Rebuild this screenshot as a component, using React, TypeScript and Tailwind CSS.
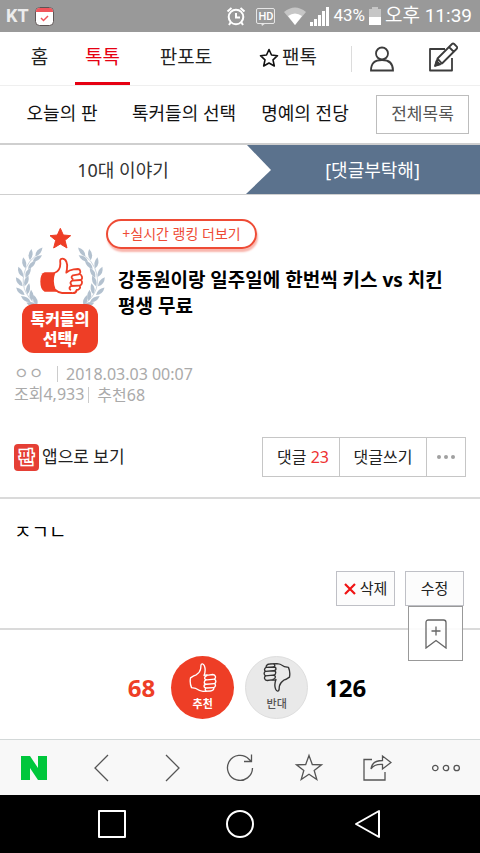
import React from 'react';

interface IconProps {
  className?: string;
}

const SUB_MENU = ['오늘의 판', '톡커들의 선택', '명예의 전당'];

// [x, y, angle] of each leaf on the left branch; the right one is mirrored
const LEAVES = [
  [106, 138, 36],
  [90, 150, 4],
  [98, 154, 52],
  [76, 174, -14],
  [84, 176, 40],
  [69, 200, -28],
  [76, 202, 26],
  [68, 228, -40],
  [74, 228, 16],
  [74, 254, -52],
  [82, 252, 6],
  [92, 275, -62],
  [96, 272, -8],
  [112, 286, -78],
  [112, 285, -24],
];

const Branch: React.FC = () => (
  <g fill="#b3c1cf">
    <path d="M114 286Q50 240 78 172Q88 150 106 138" fill="none" stroke="#b3c1cf" strokeWidth="2" />
    {LEAVES.map(([x, y, angle]) => (
      <path key={`${x}-${y}`} d="M0 0Q-12 -17 2 -34Q12 -15 0 0Z" transform={`translate(${x} ${y}) rotate(${angle})`} />
    ))}
  </g>
);

const Laurel: React.FC = () => (
  <svg viewBox="42 50 276 240" className="h-20 w-[92px]" aria-hidden="true">
    <path d="M181 54L190 74L212 76L195 90L201 113L181 101L161 113L167 90L150 76L172 74Z" fill="#ee3e26" stroke="#ee3e26" strokeWidth="3" strokeLinejoin="round" />
    <Branch />
    <g transform="translate(362 0) scale(-1 1)">
      <Branch />
    </g>
    <path d="M164 186H134Q121 190 121 214Q121 238 134 244H170Z" fill="#ee3e26" />
    <g fill="#fff" stroke="#ee3e26" strokeWidth="5.500" strokeLinejoin="round" strokeLinecap="round">
      <path d="M163 188C174 184 181 173 181 160C180 149 180 145 187 145C199 145 203 161 201 173C201 180 199 184 199 187C205 181 213 178 221 177L234 176C242 177 243 187 238 191C247 194 249 205 243 209C248 213 247 223 240 226C242 233 237 239 230 239C229 246 222 249 214 248L188 248C176 249 171 243 164 237Q154 212 163 188Z" />
      <path d="M236 192L219 195Q211 200 218 206M241 209L216 211Q208 217 214 223M238 226L213 227Q205 233 211 238" fill="none" />
    </g>
  </svg>
);

const Thumb: React.FC<IconProps> = ({ className }) => (
  <svg viewBox="0 0 80 86" className={className} fill="none" stroke="currentColor" strokeWidth="4" strokeLinejoin="round" strokeLinecap="round" aria-hidden="true">
    <path d="M3 44C10 39 16 36 20 35C27 30 32 24 33 17L34 6C35 1 41 1 44 8C48 18 47 27 43 37C48 34 52 35 56 36L69 34C78 35 79 44 74 48C80 52 79 59 74 61C79 65 77 71 72 73C73 79 68 83 62 83L40 84C30 84 24 79 18 75L6 73Q0 59 3 44Z" />
    <path d="M74 48L52 50C42 50 43 39 52 37M74 61L51 63C41 63 42 52 50 50M72 73L50 74C41 74 41 64 49 63M49 74Q44 79 49 83" />
  </svg>
);

const AlarmIcon: React.FC = () => (
  <svg viewBox="0 0 20 20" className="h-5 w-5" fill="none" stroke="currentColor" strokeWidth="2" aria-hidden="true">
    <circle cx="10" cy="11" r="7.3" />
    <path d="M10 7v4.500h4M1.500 5.500L5.500 2M18.500 5.500L14.500 2M4.500 16.500L3 19M15.500 16.500L17 19" />
  </svg>
);

const HdIcon: React.FC = () => (
  <span className="relative flex h-4 w-[19px] items-center justify-center rounded-[2px] border border-[#e6e6e6] font-[Roboto] text-[11px] font-medium leading-none">
    HD
    <svg viewBox="0 0 5 3" className="absolute -bottom-[3px] left-1 h-[3px] w-[5px]" aria-hidden="true">
      <path d="M0 0L1 3L5 0Z" fill="#e6e6e6" />
    </svg>
  </span>
);

const WifiIcon: React.FC = () => (
  <svg viewBox="0 0 24 20" className="h-5 w-6" aria-hidden="true">
    <path d="M1 6Q12 -3 23 6L12 19Z" fill="#c6c6c6" />
    <path d="M5 10Q12 5 19 10L12 19Z" fill="#fff" />
  </svg>
);

const SignalIcon: React.FC = () => (
  <svg viewBox="0 0 19 19" className="h-[19px] w-[19px]" fill="currentColor" aria-hidden="true">
    <path d="M0 15h3v4H0zM4 12h3v7H4zM8 8h3v11H8zM12 4h3v15h-3zM16 0h3v19h-3z" />
  </svg>
);

const BatteryIcon: React.FC = () => (
  <svg viewBox="0 0 12 18" className="h-[18px] w-3" aria-hidden="true">
    <path d="M3 0h6v2h3v8H0V2h3z" fill="#c6c6c6" />
    <path d="M0 10h12v8H0z" fill="#fff" />
  </svg>
);

const StatusBar: React.FC = () => (
  <header className="flex h-8 shrink-0 items-center justify-between bg-[#999999] pl-1.5 pr-2 text-white">
    <div className="flex items-center gap-1.5">
      <span className="font-[Roboto] text-lg font-bold text-[#ececec]">KT</span>
      <svg viewBox="0 0 19 19" className="h-[19px] w-[19px]" aria-hidden="true">
        <rect x="0.500" y="0.500" width="18" height="18" rx="4" fill="#fff" stroke="#5d5555" />
        <path d="M1 5V4.500Q1 1 4.500 1H14.500Q18 1 18 4.500V5Z" fill="#f0555c" />
        <path d="M6 11L8.500 13.500L13 9" fill="none" stroke="#f0555c" strokeWidth="1.500" />
      </svg>
    </div>
    <div className="flex items-center">
      <AlarmIcon />
      <span className="ml-2.5 flex items-center gap-2">
        <HdIcon />
        <WifiIcon />
      </span>
      <span className="ml-[3px] flex items-center gap-1 font-[Roboto,'Noto_Sans_CJK_KR',sans-serif] text-[17px]">
        <SignalIcon />
        43%
        <BatteryIcon />
      </span>
      <span className="ml-1 font-[Roboto,'Noto_Sans_CJK_KR',sans-serif] text-[19px] leading-8">오후 11:39</span>
    </div>
  </header>
);

const MainNav: React.FC = () => (
  <nav className="grid h-[54px] shrink-0 grid-cols-[71fr_55fr_112fr_92fr_78fr_62fr] items-center border-b border-[#efefef] pl-1 pr-1.5 text-[19px] text-[#222]">
    <a href="#home" className="pb-0.5 text-center">홈</a>
    <a href="#talk" className="flex h-full items-center justify-center border-b-[3px] border-[#e60012] pt-px text-[#e60012]">톡톡</a>
    <a href="#photo" className="pb-0.5 text-center">판포토</a>
    <a href="#fan" className="flex items-center justify-center gap-[3px] pb-0.5">
      <svg viewBox="0 0 20 20" className="h-5 w-5" fill="none" stroke="#111" strokeWidth="1.600" strokeLinejoin="round" aria-hidden="true">
        <path d="M10 1.500L12.500 7L18.500 7.700L14 11.800L15.300 18L10 15L4.700 18L6 11.800L1.500 7.700L7.500 7Z" />
      </svg>
      팬톡
    </a>
    <a href="#me" aria-label="내 정보" className="ml-[17px] flex h-[26px] items-center justify-center border-l border-[#dcdcdc]">
      <svg viewBox="0 0 26 26" className="h-[26px] w-[26px]" fill="none" stroke="#3c3c3c" strokeWidth="1.800" aria-hidden="true">
        <circle cx="13" cy="7.500" r="6" />
        <path d="M2 24.500Q2 14 13 14Q24 14 24 24.500Z" />
      </svg>
    </a>
    <a href="#write" aria-label="글쓰기" className="flex items-center justify-center pb-1">
      <svg viewBox="0 0 30 30" className="h-[30px] w-[30px]" fill="none" stroke="#3c3c3c" strokeWidth="1.800" strokeLinejoin="round" aria-hidden="true">
        <path d="M17 7H2V28.500H24V16" />
        <path d="M7.500 23.500L9.500 16.500L24 2Q25 1 26.200 2L29 4.800Q29.500 6 28.500 7L14 21.500ZM9.500 16.500L14 21.500M21 5L25.500 9.500" />
        <path d="M7 24L8.500 19L12 22.500Z" fill="#3c3c3c" />
      </svg>
    </a>
  </nav>
);

const SubNav: React.FC = () => (
  <nav className="grid h-[57px] shrink-0 grid-cols-[124fr_120fr_122fr_103fr] items-center pr-[11px] text-lg text-[#111]">
    {SUB_MENU.map((label) => (
      <a key={label} href="#menu" className="whitespace-nowrap pb-1 text-center">{label}</a>
    ))}
    <button type="button" className="h-[39px] w-[93px] justify-self-end border border-[#bdbdbd] text-[17px] text-[#555]">전체목록</button>
  </nav>
);

const CategoryTabs: React.FC = () => (
  <nav className="flex h-[52px] shrink-0 border-b border-t-2 border-[#cfcfcf] text-lg">
    <a href="#ten" className="flex flex-[246] items-center justify-center text-[#333]">10대 이야기</a>
    <a href="#reply" className="flex flex-[234] items-center bg-[#5b728d] text-white">
      <svg viewBox="0 0 25 49" className="h-full w-[25px]" aria-hidden="true">
        <path d="M0 0H1L25 25L0 49Z" fill="#fff" />
      </svg>
      <span className="flex-1 pr-1.5 text-center">[댓글부탁해]</span>
    </a>
  </nav>
);

const ArticleHead: React.FC = () => (
  <section className="border-b-2 border-[#dadada] px-3.5 pb-5 pt-6">
    <div className="flex gap-3">
      <div className="flex w-[92px] shrink-0 flex-col items-center pt-2">
        <Laurel />
        <strong className="-mt-[3px] flex h-[49px] w-[76px] flex-col items-center justify-center rounded-xl bg-[#ee3e26] text-base font-black leading-5 text-white">
          <span>톡커들의</span>
          <span>선택<i>!</i></span>
        </strong>
      </div>
      <div className="min-w-0 flex-1">
        <a href="#ranking" className="-ml-3 inline-flex h-[30px] w-[151px] items-center justify-center rounded-full border-2 border-[#ee4b35] bg-white text-sm text-[#ee4b35] shadow-[1px_3px_2px_#f9b5ac]">
          +실시간 랭킹 더보기
        </a>
        <h1 className="mt-[18px] break-keep text-[19px] font-bold leading-[26px] text-black">강동원이랑 일주일에 한번씩 키스 vs 치킨 평생 무료</h1>
      </div>
    </div>
    <div className="mt-2.5 text-base leading-[21px] text-[#aaa]">
      <p className="flex items-center gap-2">
        <span className="w-[35px]">ㅇㅇ</span>
        <span className="border-l border-[#ccc] pl-2 leading-4">2018.03.03 00:07</span>
      </p>
      <p className="flex items-center gap-1">
        <span>조회4,933</span>
        <span className="border-l border-[#ccc] pl-2 leading-4">추천68</span>
      </p>
    </div>
    <div className="mt-8 flex items-center justify-between">
      <a href="#app" className="flex items-center gap-[3px] text-[17px] text-[#222]">
        <span className="flex h-[27px] w-[25px] items-center justify-center rounded bg-[#e53f35] text-base font-bold leading-none text-[#e53f35] [paint-order:stroke_fill] [-webkit-text-stroke:3px_white]">판</span>
        앱으로 보기
      </a>
      <div className="flex h-10 divide-x divide-[#c6c6c6] border border-[#c6c6c6] text-base text-[#222]">
        <button type="button" className="w-[77px] pl-1">댓글 <span className="text-[#ee3030]">23</span></button>
        <button type="button" className="w-[87px]">댓글쓰기</button>
        <button type="button" aria-label="더보기" className="flex w-[38px] items-center justify-center gap-[3px]">
          <i className="h-1 w-1 rounded-full bg-[#a0a0a0]" />
          <i className="h-1 w-1 rounded-full bg-[#a0a0a0]" />
          <i className="h-1 w-1 rounded-full bg-[#a0a0a0]" />
        </button>
      </div>
    </div>
  </section>
);

const ArticleBody: React.FC = () => (
  <section className="border-b-2 border-[#dadada] px-4 pb-[22px] pt-[18px] text-black">
    <p className="-ml-0.5 text-[19px] leading-[30px]">ㅈㄱㄴ</p>
    <div className="mt-6 flex justify-end gap-2.5 text-[15px] text-[#222]">
      <button type="button" className="flex h-[35px] w-[59px] items-center justify-center gap-1 border border-[#bfc0c6] bg-[#fcfcfc]">
        <svg viewBox="0 0 12 12" className="h-3 w-3" stroke="#f01414" strokeWidth="2.200" aria-hidden="true">
          <path d="M1 1L11 11M11 1L1 11" />
        </svg>
        삭제
      </button>
      <button type="button" className="h-[35px] w-[59px] border border-[#bfc0c6] bg-[#fcfcfc]">수정</button>
    </div>
  </section>
);

const VoteArea: React.FC = () => (
  <section className="relative flex items-center pb-5 pl-3.5 pt-[26px]">
    <button type="button" aria-label="북마크" className="absolute -top-6 right-[17px] flex h-[55px] w-[55px] items-center justify-center border border-[#999] bg-white/90">
      <svg viewBox="0 0 22 30" className="h-[30px] w-[22px]" fill="none" stroke="#666" strokeWidth="1.300" aria-hidden="true">
        <path d="M1 29V3.500Q1 1 3.500 1H18.500Q21 1 21 3.500V29L11 21.500ZM11 7.500V16.500M6.500 12H15.500" />
      </svg>
    </button>
    <div className="flex flex-1 items-center justify-center">
      <strong className="text-2xl text-[#ee3e26]">68</strong>
      <button type="button" className="ml-4 flex h-[63px] w-[63px] flex-col items-center rounded-full bg-[#ee3e26] pt-[7px] text-white">
        <Thumb className="h-[29px] w-7" />
        <span className="mt-1 text-[11px] font-bold leading-4">추천</span>
      </button>
      <button type="button" className="ml-[11px] flex h-[63px] w-[63px] flex-col items-center rounded-full border border-[#dedede] bg-[#e9e9e9] pt-1.5 text-[#333]">
        <Thumb className="h-[29px] w-7 rotate-180" />
        <span className="mt-1 text-[11px] font-medium leading-4 text-[#555]">반대</span>
      </button>
      <strong className="ml-[17px] text-2xl text-black">126</strong>
    </div>
  </section>
);

const TOOLS = [
  { label: '뒤로', path: 'M20 2L7 15L20 28' },
  { label: '앞으로', path: 'M10 2L23 15L10 28' },
  { label: '새로고침', path: 'M27.500 15A12.500 12.500 0 1 1 24 6.200L26.500 8.500M26.500 1.500V8.500H19' },
  { label: '즐겨찾기', path: 'M15 2.500L18.300 11.500L27.500 11.800L20.200 17.500L22.800 26.500L15 21.300L7.200 26.500L9.800 17.500L2.500 11.800L11.700 11.500Z' },
  { label: '공유', path: 'M10 6.500H2V27H23V19M9 16Q10 7.500 20.500 7.500V3L29 9.500L20.500 16V11.500Q12 11 9 16Z' },
  { label: '메뉴', path: 'M7 15A2.700 2.700 0 1 1 1.600 15A2.700 2.700 0 1 1 7 15ZM17.700 15A2.700 2.700 0 1 1 12.300 15A2.700 2.700 0 1 1 17.700 15ZM28.400 15A2.700 2.700 0 1 1 23 15A2.700 2.700 0 1 1 28.400 15Z' },
];

const Toolbar: React.FC = () => (
  <nav className="grid h-14 grid-cols-7 border-t border-[#d3d8d8] bg-[#f8f8f8] text-[#555]">
    <button type="button" aria-label="홈" className="flex items-center justify-center">
      <svg viewBox="0 0 26 24" className="h-6 w-[26px]" fill="#00c73c" aria-hidden="true">
        <path d="M0 0H9L17 12V0H26V24H17L9 12V24H0Z" />
      </svg>
    </button>
    {TOOLS.map((tool) => (
      <button key={tool.label} type="button" aria-label={tool.label} className="flex items-center justify-center">
        <svg viewBox="0 0 30 30" className="h-[30px] w-[30px]" fill="none" stroke="currentColor" strokeWidth="1.300" aria-hidden="true">
          <path d={tool.path} />
        </svg>
      </button>
    ))}
  </nav>
);

const SYSTEM_KEYS = [
  { label: '최근 앱', path: 'M2 2H28V28H2Z' },
  { label: '홈 화면', path: 'M15 2A13 13 0 1 1 15 28A13 13 0 1 1 15 2Z' },
  { label: '이전', path: 'M26 2V28L3 15Z' },
];

const SystemBar: React.FC = () => (
  <nav className="grid h-[58px] grid-cols-3 bg-black px-12 text-white">
    {SYSTEM_KEYS.map((item) => (
      <button key={item.label} type="button" aria-label={item.label} className="flex items-center justify-center">
        <svg viewBox="0 0 30 30" className="h-[30px] w-[30px]" fill="none" stroke="currentColor" strokeWidth="2" strokeLinejoin="round" aria-hidden="true">
          <path d={item.path} />
        </svg>
      </button>
    ))}
  </nav>
);

const App: React.FC = () => {
  return (
    <div className="flex min-h-screen flex-col bg-white font-['Noto_Sans','Noto_Sans_CJK_KR',sans-serif]">
      <StatusBar />
      <MainNav />
      <SubNav />
      <CategoryTabs />
      <main className="flex-1">
        <ArticleHead />
        <ArticleBody />
        <VoteArea />
      </main>
      <footer className="sticky bottom-0">
        <Toolbar />
        <SystemBar />
      </footer>
    </div>
  );
};

export default App;
